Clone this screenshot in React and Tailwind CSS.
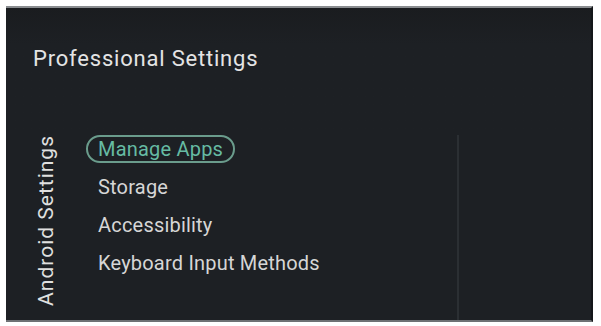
export default function App() {
  const items = ['Manage Apps', 'Storage', 'Accessibility', 'Keyboard Input Methods']

  return (
    <div className="w-[601px] h-[326px] bg-white p-[6px] pb-[4px]" style={{ fontFamily: 'Roboto, "Noto Sans", sans-serif' }}>
      <div className="w-[587px] h-[316px] bg-[#1d2024] border-t-2 border-b-2 border-r-2 border-t-[#8a8d90] border-b-[#6e7174] border-r-[#141619] flex flex-col">
        {/* Titel */}
        <div className="h-[121px] pl-[27px] pt-[37px] bg-gradient-to-b from-[#1a1c1f] to-[#1d2024] to-[30%]">
          <h1 className="text-[22px] leading-[28px] tracking-[0.8px] text-[#e4e4e4]">Professional Settings</h1>
        </div>

        <div className="flex-1 flex">
          {/* Seitenleiste */}
          <div className="w-[69px] flex items-start pl-[29px] pt-[6px]">
            <span className="[writing-mode:vertical-rl] rotate-180 text-[21px] leading-[22px] tracking-[1px] text-[#e0e0e0]">
              Android Settings
            </span>
          </div>

          {/* Menü */}
          <div className="w-[382px] flex flex-col pl-[11px] pt-[1px]">
            {items.map((item, i) => (
              <div key={item} className="h-[38px] flex items-center">
                {i === 0 ? (
                  <span className="h-[28px] px-[10px] flex items-center rounded-full border-2 border-[#6a9c8c] text-[#66bba3] text-[20px] tracking-[0.2px]">
                    {item}
                  </span>
                ) : (
                  <span className="px-[12px] text-[20px] tracking-[0.2px] text-[#d6d6d6]">{item}</span>
                )}
              </div>
            ))}
          </div>

          {/* Trennlinie */}
          <div className="w-[2px] bg-[#2b2f33] mt-[6px]" />
          <div className="flex-1" />
        </div>
      </div>
    </div>
  )
}
